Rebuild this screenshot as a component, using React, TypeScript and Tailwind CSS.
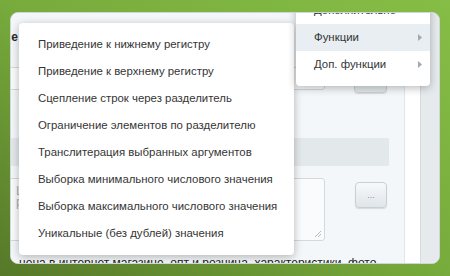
import React from "react";

const mainItems = [
  "Приведение к нижнему регистру",
  "Приведение к верхнему регистру",
  "Сцепление строк через разделитель",
  "Ограничение элементов по разделителю",
  "Транслитерация выбранных аргументов",
  "Выборка минимального числового значения",
  "Выборка максимального числового значения",
  "Уникальные (без дублей) значения",
];

const subItems = [
  { label: "Дополнительно", active: false, arrow: false },
  { label: "Функции", active: true, arrow: true },
  { label: "Доп. функции", active: false, arrow: true },
];

function ResizeHandle() {
  return (
    <svg className="absolute right-[2px] bottom-[2px]" width="8" height="8" viewBox="0 0 8 8">
      <path d="M7 1 L1 7 M7 4 L4 7" stroke="#b5bcc0" strokeWidth="1" fill="none" />
    </svg>
  );
}

function DotsButton({ className }: { className: string }) {
  return (
    <div
      className={
        "flex items-center justify-center rounded-[4px] border border-[#c9d0d4] bg-[linear-gradient(#f7f9fa,#dfe5e8)] shadow-[0_1px_1px_rgba(0,0,0,0.12)] text-[9px] leading-none text-[#8a9296] " +
        className
      }
    >
      ...
    </div>
  );
}

export default function App() {
  return (
    <div
      className="w-[450px] h-[276px] overflow-hidden bg-[linear-gradient(to_bottom_left,#86bd46,#77ab3c_50%,#567829)] pt-[12px] pl-[10px]"
      style={{ fontFamily: '"Liberation Sans", Arial, sans-serif' }}
    >
      <div className="relative w-[430px] h-[252px] rounded-[8px] overflow-hidden border border-[#cfd6d9] bg-[#f4f7f9] flex">
        {/* form content */}
        <div className="w-[394px] h-full bg-[#f4f7f9] border-r border-[#e1e6e9] flex flex-col [&>*]:shrink-0">
          <div className="h-[54px] pt-[17px] flex">
            <div className="w-[7px] flex justify-end">
              <span className="whitespace-nowrap text-[12px] leading-[14px] font-bold text-[#2b2b2b]">Описание</span>
            </div>
          </div>
          <div className="h-[26px] flex items-start">
            <div className="relative -ml-[20px] w-[334px] h-[23px] rounded-[3px] border border-[#d3d9dc] bg-[#f9fbfc]">
              <ResizeHandle />
            </div>
            <DotsButton className="ml-[29px] w-[33px] h-[26px]" />
          </div>
          <div className="h-[45px]" />
          <div className="h-[28px] w-[378px] bg-[#e3e8eb]" />
          <div className="h-[12px]" />
          <div className="h-[63px] flex items-start">
            <div className="relative -ml-[20px] w-[334px] h-[63px] rounded-[3px] border border-[#d3d9dc] bg-[#f9fbfc] pl-[24px] pt-[7px] text-[12px] leading-[11px] text-[#a9b0b4] whitespace-nowrap overflow-hidden">
              <div>LOGO</div>
              <div>pgroup</div>
              <ResizeHandle />
            </div>
            <DotsButton className="ml-[30px] mt-[4px] w-[32px] h-[26px]" />
          </div>
          <div className="h-[15px]" />
          <div className="pl-[8px] whitespace-nowrap text-[12px] leading-[14px] text-[#222]">
            цена в интернет магазине, опт и розница, характеристики, фото
          </div>
        </div>
        <div className="w-[15px] h-full bg-white" />
        <div className="w-[19px] h-full bg-[#e6eaec] border-l border-[#d5dbde]" />

        {/* main dropdown menu */}
        <div className="absolute left-[8px] top-[10px] w-[275px] py-[8px] bg-white rounded-[4px] shadow-[0_2px_8px_rgba(0,0,0,0.28)]">
          {mainItems.map((t) => (
            <div key={t} className="h-[27px] flex items-center pl-[19px] text-[11.4px] text-[#353535] whitespace-nowrap">
              {t}
            </div>
          ))}
        </div>

        {/* submenu */}
        <div className="absolute left-[285px] top-[-24px] w-[134px] py-[8px] bg-white rounded-[4px] shadow-[0_2px_8px_rgba(0,0,0,0.28)]">
          {subItems.map((s) => (
            <div
              key={s.label}
              className={
                "h-[27px] flex items-center justify-between pl-[18px] pr-[8px] text-[11.4px] text-[#353535] whitespace-nowrap " +
                (s.active ? "bg-[#e8eef1]" : "")
              }
            >
              <span>{s.label}</span>
              {s.arrow && (
                <svg width="4" height="7" viewBox="0 0 4 7">
                  <path d="M0 0 L4 3.5 L0 7 Z" fill="#a3aaae" />
                </svg>
              )}
            </div>
          ))}
        </div>
      </div>
    </div>
  );
}
